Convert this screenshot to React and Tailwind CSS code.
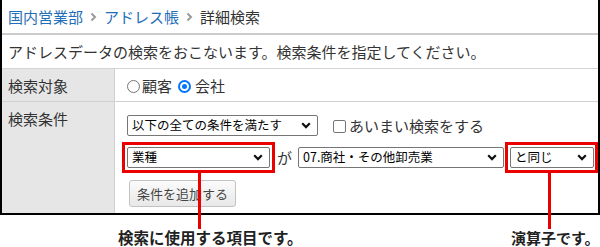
import React from "react";

const Chevron = () => (
  <svg width="10" height="7" viewBox="0 0 10 7" className="shrink-0">
    <path d="M1.2 1.3 L5 5.1 L8.8 1.3" fill="none" stroke="#111" strokeWidth="2.2" />
  </svg>
);

const Crumb = () => (
  <svg width="7" height="10" viewBox="0 0 7 10" className="mx-[7px] mt-[1px]">
    <path d="M1.5 1.5 L5 5 L1.5 8.5" fill="none" stroke="#9a9a9a" strokeWidth="2" />
  </svg>
);

const FakeSelect = ({ text, className }) => (
  <div
    className={`flex items-center justify-between h-[21px] border border-[#767676] rounded-[2px] bg-white pl-[4px] pr-[6px] text-[12.5px] text-black leading-none ${className}`}
  >
    <span>{text}</span>
    <Chevron />
  </div>
);

export default function App() {
  return (
    <div className="relative w-[600px] h-[247px] bg-white text-[#333] font-['Noto_Sans_CJK_JP','Noto_Sans',sans-serif] overflow-hidden">
      <div className="w-[600px] h-[215px] border-2 border-t-0 border-black flex flex-col">
        {/* breadcrumb */}
        <div className="h-[35px] shrink-0 border-b-2 border-[#cccccc] flex items-center pl-[6px] text-[15px] leading-none">
          <span className="text-[#1f6eb8]">国内営業部</span>
          <Crumb />
          <span className="text-[#1f6eb8]">アドレス帳</span>
          <Crumb />
          <span className="text-[#333]">詳細検索</span>
        </div>

        {/* description */}
        <div className="h-[34px] shrink-0 border-b border-[#d4d4d4] flex items-center pl-[6px] text-[15px] leading-none">
          アドレスデータの検索をおこないます。検索条件を指定してください。
        </div>

        {/* table */}
        <div className="grid grid-cols-[113px_1fr] grid-rows-[33px_1fr] flex-1">
          <div className="bg-[#e6e6e6] border-r border-b border-[#d0d0d0] flex items-center pl-[6px] text-[15px] leading-none">
            検索対象
          </div>
          <div className="border-b border-[#d0d0d0] flex items-center pl-[12px] text-[15px] leading-none">
            <span className="w-[13px] h-[13px] rounded-full border border-[#767676] bg-white mt-[2px]" />
            <span className="ml-[2px]">顧客</span>
            <span className="ml-[6px] mt-[2px] w-[13px] h-[13px] rounded-full border-2 border-[#0075ff] bg-white flex items-center justify-center">
              <span className="w-[5px] h-[5px] rounded-full bg-[#0075ff]" />
            </span>
            <span className="ml-[4px]">会社</span>
          </div>

          <div className="bg-[#e6e6e6] border-r border-[#d0d0d0] pl-[6px] pt-[9px] text-[15px] leading-none">
            検索条件
          </div>
          <div className="pt-[13px] flex flex-col">
            <div className="flex items-center ml-[12px]">
              <FakeSelect text="以下の全ての条件を満たす" className="w-[191px]" />
              <span className="ml-[15px] w-[13px] h-[13px] rounded-[2px] border border-[#767676] bg-white mt-[1px]" />
              <span className="ml-[3px] text-[15px] leading-none">あいまい検索をする</span>
            </div>

            <div className="flex items-center ml-[7px] mt-[6px]">
              <div className="border-[3px] border-[#eb0000] p-[2px]">
                <FakeSelect text="業種" className="w-[143px]" />
              </div>
              <span className="ml-[2px] mr-[6px] text-[15px] leading-none">が</span>
              <FakeSelect text="07.商社・その他卸売業" className="w-[206px]" />
              <div className="ml-[1px] border-[3px] border-[#eb0000] py-[2px] pl-[2px] pr-[1px]">
                <FakeSelect text="と同じ" className="w-[84px]" />
              </div>
            </div>

            <div className="ml-[14px] mt-[7px]">
              <button className="w-[107px] h-[27px] border border-[#c2c2c2] rounded-[3px] bg-gradient-to-b from-[#fbfbfb] to-[#e8e8e8] text-[13px] text-[#444] leading-none">
                条件を追加する
              </button>
            </div>
          </div>
        </div>
      </div>

      {/* callout annotations */}
      <div className="absolute left-[198px] top-[173px] w-[3px] h-[56px] bg-[#eb0000]" />
      <div className="absolute left-[548px] top-[172px] w-[3px] h-[57px] bg-[#eb0000]" />
      <div className="absolute left-[118px] top-[230px] text-[15.5px] font-bold leading-none text-[#222]">
        検索に使用する項目です。
      </div>
      <div className="absolute left-[511px] top-[230px] text-[15px] font-bold leading-none text-[#222] whitespace-nowrap">
        演算子です。
      </div>
    </div>
  );
}
